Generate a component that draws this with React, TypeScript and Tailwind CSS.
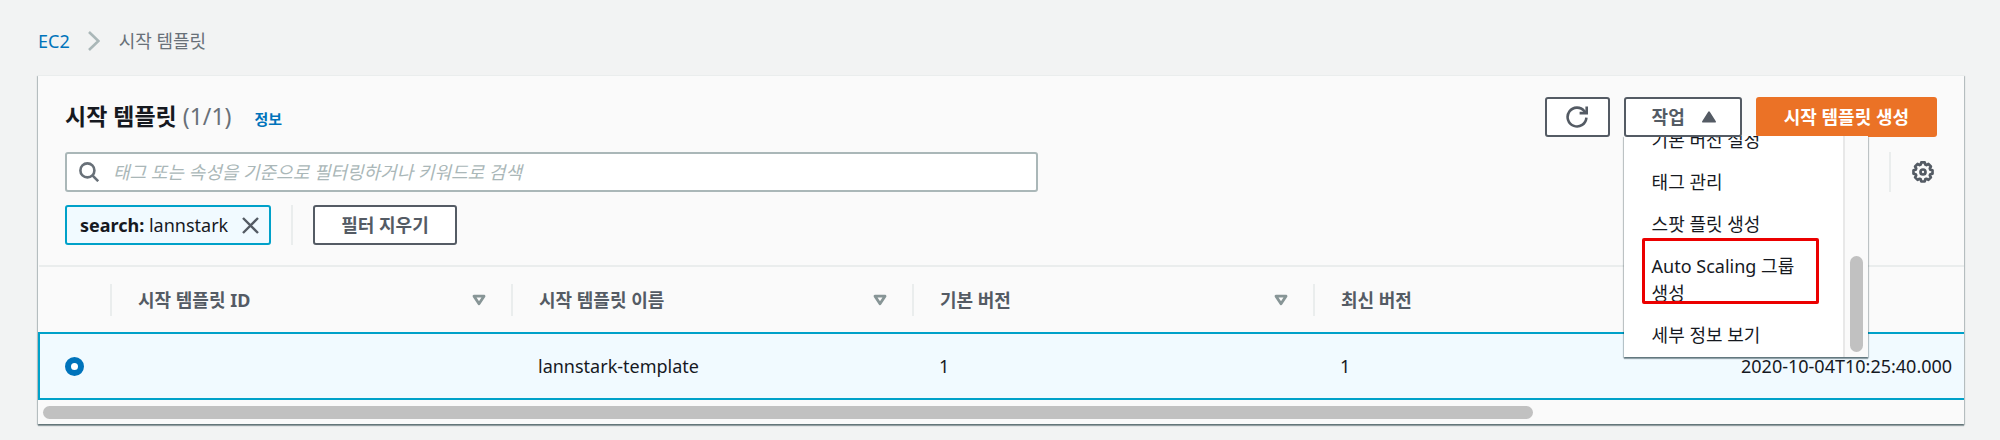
import { useState } from "react";
import clsx from "clsx";

const cardShadow =
  "shadow-[0_2px_1px_0_rgba(0,28,36,0.35),1px_1px_1px_0_rgba(0,28,36,0.2),-1px_1px_1px_0_rgba(0,28,36,0.2)]";

const columns = [
  { key: "id", label: "시작 템플릿 ID" },
  { key: "name", label: "시작 템플릿 이름" },
  { key: "defaultVersion", label: "기본 버전" },
  { key: "latestVersion", label: "최신 버전" },
  { key: "created", label: "" },
] as const;

const templates = [
  {
    id: "",
    name: "lannstark-template",
    defaultVersion: "1",
    latestVersion: "1",
    created: "2020-10-04T10:25:40.000",
  },
];

const actions = [
  { label: "기본 버전 설정" },
  { label: "태그 관리" },
  { label: "스팟 플릿 생성" },
  { label: "Auto Scaling 그룹 생성", marked: true },
  { label: "세부 정보 보기" },
];

function RefreshIcon() {
  return (
    <svg viewBox="0 0 22 22" className="size-[22px]" fill="none" stroke="currentColor" strokeWidth="2.6">
      <path d="M20.4 11.6A9.4 9.4 0 1 1 18.4 5.2L20 7" />
      <path d="M20.7 0.4V7.1H13.6" />
    </svg>
  );
}

function GearIcon() {
  return (
    <svg viewBox="0 0 22 22" className="size-[22px]" fill="none" stroke="currentColor" strokeWidth="2.7" strokeLinejoin="round">
      <path d="M9.3 1.4h3.4l.6 2.2 1.1.5 2-1.1 2.5 2.5-1.1 2 .5 1.2 2.2.6v3.4l-2.2.6-.5 1.1 1.1 2-2.5 2.5-2-1.1-1.1.5-.6 2.2H9.3l-.6-2.2-1.1-.5-2 1.1-2.5-2.5 1.1-2-.5-1.1-2.2-.6V9.3l2.2-.6.5-1.2-1.1-2 2.5-2.5 2 1.1 1.1-.5z" />
      <circle cx="11" cy="11" r="2.5" />
    </svg>
  );
}

function SortIcon() {
  return (
    <svg viewBox="0 0 14 12" className="h-3 w-3.5 text-[#879596]" fill="none" stroke="currentColor" strokeWidth="2.8" strokeLinejoin="round">
      <path d="M2 2.2h10L7 9.8z" />
    </svg>
  );
}

function Breadcrumb() {
  return (
    <nav aria-label="breadcrumb" className="flex items-center px-[38px] pt-[27px] pb-5 leading-7">
      <a href="#ec2" className="text-[#0073bb]">EC2</a>
      <svg viewBox="0 0 12 20" className="mr-[19px] ml-[18px] h-5 w-3 text-[#aab7b8]" fill="none" stroke="currentColor" strokeWidth="2.6">
        <path d="M1 1l9.4 9L1 19" />
      </svg>
      <span className="text-[#687078]">시작 템플릿</span>
    </nav>
  );
}

function ActionsMenu() {
  const [open, setOpen] = useState(true);

  return (
    <div className="relative">
      <button
        type="button"
        aria-expanded={open}
        onClick={() => setOpen(!open)}
        className="relative z-20 flex h-10 items-center gap-[17px] rounded-[3px] border-2 border-[#545b64] bg-white pr-6 pl-[26px] font-bold text-[#545b64]"
      >
        작업
        <svg viewBox="0 0 14 12" className="h-3 w-3.5" fill="currentColor">
          <path d="M6.2.8a1 1 0 0 1 1.6 0l6 9.4a.9.9 0 0 1-.8 1.4H1a.9.9 0 0 1-.8-1.4z" />
        </svg>
      </button>

      {open && (
        <div className={clsx("absolute top-[39px] left-0 z-10 flex h-[221px] w-[244px] bg-white", cardShadow)}>
          {/* list is scrolled to its end */}
          <ul className="flex flex-1 flex-col justify-end gap-px overflow-hidden pb-px">
            {actions.map((action) => (
              <li key={action.label} className="relative shrink-0">
                <button type="button" className="block w-full px-7 py-[7px] text-left leading-[27px] text-[#16191f]">
                  {action.label}
                </button>
                {action.marked && (
                  <span className="pointer-events-none absolute -top-2 left-[18px] h-[66px] w-[177px] rounded-xs border-3 border-[#eb0000]" />
                )}
              </li>
            ))}
          </ul>
          <div className="flex w-[25px] flex-col items-center justify-end border-l-2 border-[#e8e8e8] bg-[#fafafa] pb-[5px]">
            <div className="h-24 w-[13px] rounded-full bg-[#c1c1c1]" />
          </div>
        </div>
      )}
    </div>
  );
}

function TemplatesTable() {
  return (
    <div className="overflow-hidden">
      <table className="w-[2076px] table-fixed border-collapse text-left">
        <thead>
          <tr className="h-[67px] border-t-2 border-[#eaeded] text-[#545b64]">
            <th className="w-[71px]" aria-label="선택" />
            {columns.map((column) => (
              <th key={column.key} className="w-[401px] p-0 font-bold">
                <div className="flex h-8 items-center justify-between border-l-2 border-[#eaeded] pr-[25px] pl-[26px]">
                  {column.label}
                  <SortIcon />
                </div>
              </th>
            ))}
          </tr>
        </thead>
        <tbody>
          {templates.map((template) => (
            <tr key={template.name} className="h-[66px] border-2 border-[#00a1c9] bg-[#f1faff] text-[#16191f]">
              <td className="p-0 pl-[25px]">
                <input
                  type="radio"
                  name="template"
                  aria-label={template.name}
                  defaultChecked
                  className="block size-[19px] appearance-none rounded-full border-[6px] border-[#0073bb] bg-white"
                />
              </td>
              {columns.map((column) => (
                <td key={column.key} className="p-0 pl-[27px] whitespace-nowrap">
                  {template[column.key]}
                </td>
              ))}
            </tr>
          ))}
        </tbody>
      </table>
      <div className="h-6 px-[5px] pt-1.5">
        <div className="h-[13px] w-7/9 rounded-full bg-[#c1c1c1]" />
      </div>
    </div>
  );
}

export default function App() {
  return (
    <div className="min-h-screen bg-[#f2f3f3] pb-4 font-['Noto_Sans','Noto_Sans_CJK_KR',sans-serif] text-[18px] leading-7">
      <Breadcrumb />

      <main className={clsx("mr-9 ml-[38px] bg-[#fafafa]", cardShadow)}>
        <header className="border-t border-[#eaeded] px-[27px] pt-[21px] pb-5">
          <div className="flex items-center justify-between">
            <div className="flex items-baseline gap-[23px]">
              <h1 className="text-[23px] font-bold text-[#16191f]">
                시작 템플릿 <span className="font-normal text-[#687078]">(1/1)</span>
              </h1>
              <a href="#info" className="text-[15px] font-bold text-[#0073bb]">정보</a>
            </div>
            <div className="flex gap-3.5">
              <button
                type="button"
                aria-label="새로 고침"
                className="flex h-10 w-[65px] items-center justify-center rounded-[3px] border-2 border-[#545b64] bg-white text-[#545b64]"
              >
                <RefreshIcon />
              </button>
              <ActionsMenu />
              <button type="button" className="h-10 rounded-[3px] bg-[#eb7226] px-7 font-bold text-white">
                시작 템플릿 생성
              </button>
            </div>
          </div>

          <div className="mt-[15px] flex items-center justify-between">
            <label className="flex h-10 w-[52%] items-center gap-3.5 rounded-[3px] border-2 border-[#aab7b8] bg-white px-3">
              <svg viewBox="0 0 20 20" className="size-5 shrink-0 text-[#687078]" fill="none" stroke="currentColor" strokeWidth="2.6">
                <circle cx="8.4" cy="8.4" r="7" />
                <path d="M13.4 13.4l5.8 5.8" />
              </svg>
              <input
                type="text"
                aria-label="검색"
                placeholder="태그 또는 속성을 기준으로 필터링하거나 키워드로 검색"
                className="min-w-0 flex-1 bg-transparent outline-none placeholder:text-[#aab7b8] placeholder:italic"
              />
            </label>
            <div className="flex h-10 items-center border-l-2 border-[#eaeded] pr-[3px] pl-[21px]">
              <button type="button" aria-label="기본 설정" className="text-[#545b64]">
                <GearIcon />
              </button>
            </div>
          </div>

          <div className="mt-[13px] flex items-center gap-5">
            <div className="flex h-10 items-center gap-3.5 rounded-[3px] border-2 border-[#00a1c9] bg-[#f1faff] pr-2.5 pl-[13px] text-[#16191f]">
              <span>
                <b>search:</b> lannstark
              </span>
              <button type="button" aria-label="필터 제거" className="text-[#545b64]">
                <svg viewBox="0 0 17 17" className="size-[17px]" fill="none" stroke="currentColor" strokeWidth="2.4">
                  <path d="M1 1l15 15M16 1L1 16" />
                </svg>
              </button>
            </div>
            <div className="h-10 w-0.5 bg-[#eaeded]" />
            <button type="button" className="h-10 rounded-[3px] border-2 border-[#545b64] bg-white px-[26px] font-bold text-[#545b64]">
              필터 지우기
            </button>
          </div>
        </header>

        <TemplatesTable />
      </main>
    </div>
  );
}
